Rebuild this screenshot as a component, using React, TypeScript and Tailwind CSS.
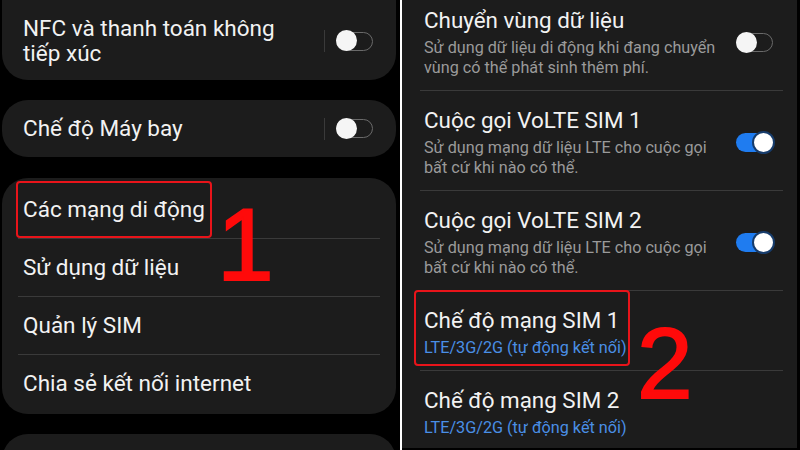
import React from 'react';

function Toggle({ on }: { on?: boolean }) {
  if (on) {
    return (
      <div className="relative w-[37px] h-[19px] rounded-full bg-[#1f7cf0] shrink-0">
        <div className="absolute right-[-2px] top-[-2px] w-[23px] h-[23px] rounded-full bg-white border-[2px] border-[#173c6b]" />
      </div>
    );
  }
  return (
    <div className="relative w-[37px] h-[19px] rounded-full border-[1.5px] border-[#6a6a6a] shrink-0">
      <div className="absolute left-[-1.5px] top-[-2.5px] w-[21px] h-[21px] rounded-full bg-[#f5f5f5]" />
    </div>
  );
}

const leftRows = ['Các mạng di động', 'Sử dụng dữ liệu', 'Quản lý SIM', 'Chia sẻ kết nối internet'];

const rightRows = [
  { title: 'Chuyển vùng dữ liệu', sub: ['Sử dụng dữ liệu di động khi đang chuyển', 'vùng có thể phát sinh thêm phí.'], toggle: 'off' },
  { title: 'Cuộc gọi VoLTE SIM 1', sub: ['Sử dụng mạng dữ liệu LTE cho cuộc gọi', 'bất cứ khi nào có thể.'], toggle: 'on' },
  { title: 'Cuộc gọi VoLTE SIM 2', sub: ['Sử dụng mạng dữ liệu LTE cho cuộc gọi', 'bất cứ khi nào có thể.'], toggle: 'on' },
  { title: 'Chế độ mạng SIM 1', blue: 'LTE/3G/2G (tự động kết nối)' },
  { title: 'Chế độ mạng SIM 2', blue: 'LTE/3G/2G (tự động kết nối)' },
];

export default function App() {
  return (
    <div
      className="w-[800px] h-[450px] flex overflow-hidden bg-black text-[#f2f2f2]"
      style={{ fontFamily: 'Roboto, "Noto Sans", sans-serif' }}
    >
      {/* Left screen */}
      <div className="relative w-[400px] shrink-0 bg-black pl-[2px] pr-[4px] flex flex-col">
        <div className="-mt-[30px] h-[110px] shrink-0 rounded-[26px] bg-[#1c1c1c] flex items-end pb-[14px] pl-[21px] pr-[23px]">
          <div className="flex items-center w-full">
            <div className="flex-1 text-[22.5px] leading-[25px]">
              NFC và thanh toán không
              <br />
              tiếp xúc
            </div>
            <div className="w-px h-[22px] bg-[#3a3a3a] mr-[11px]" />
            <Toggle />
          </div>
        </div>

        <div className="mt-[20px] h-[57px] shrink-0 rounded-[26px] bg-[#1c1c1c] flex items-center pl-[21px] pr-[23px]">
          <div className="flex-1 text-[22.5px]">Chế độ Máy bay</div>
          <div className="w-px h-[22px] bg-[#3a3a3a] mr-[11px]" />
          <Toggle />
        </div>

        <div className="relative mt-[21px] shrink-0 rounded-[26px] bg-[#1c1c1c] pt-[3px] pb-[2px]">
          {leftRows.map((row, i) => (
            <div key={row}>
              {i > 0 && <div className="mx-[16px] h-px bg-[#3a3a3a]" />}
              <div className="h-[57px] flex items-center pl-[21px] text-[22.5px]">{row}</div>
            </div>
          ))}
          <div className="absolute left-[14px] top-[3px] w-[196px] h-[57px] rounded-[4px] border-[2px] border-[#e8141a]" />
        </div>

        <div className="mt-[20px] h-[60px] shrink-0 rounded-[26px] bg-[#1c1c1c]" />

        <div
          className="absolute left-[217px] top-[194px] text-[102px] leading-none text-[#ff0a0a] [-webkit-text-stroke:2px_#ff0a0a]"
          style={{ fontFamily: '"Liberation Sans", Arial, sans-serif' }}
        >
          1
        </div>
      </div>

      <div className="w-[2px] shrink-0 bg-white" />

      {/* Right screen */}
      <div className="relative flex-1 bg-[#1c1c1c] border-r-[3px] border-b-[2px] border-black flex flex-col">
        <div className="-mt-[9px]">
          {rightRows.map((row, i) => (
            <div key={row.title}>
              {i > 0 && <div className="ml-[18px] mr-[14px] h-px bg-[#3a3a3a]" />}
              <div className="flex items-center pl-[22px] pr-[24px] pt-[16px] pb-[12px]">
                <div className="flex-1">
                  <div className="text-[22.4px] leading-[26px]">{row.title}</div>
                  {row.sub && (
                    <div className="mt-[5px] text-[16.2px] leading-[20px] text-[#9a9a9a]">
                      {row.sub.map((s) => (
                        <div key={s}>{s}</div>
                      ))}
                    </div>
                  )}
                  {row.blue && (
                    <div className="mt-[5px] text-[16.2px] leading-[20px] text-[#4a8fe6]">{row.blue}</div>
                  )}
                </div>
                {row.toggle && <Toggle on={row.toggle === 'on'} />}
              </div>
            </div>
          ))}
        </div>

        <div className="absolute left-[12px] top-[290px] w-[216px] h-[76px] rounded-[4px] border-[2px] border-[#e8141a]" />
        <div
          className="absolute left-[235px] top-[313px] text-[100px] leading-none text-[#ff0a0a] [-webkit-text-stroke:2px_#ff0a0a]"
          style={{ fontFamily: '"Liberation Sans", Arial, sans-serif' }}
        >
          2
        </div>
      </div>
    </div>
  );
}
